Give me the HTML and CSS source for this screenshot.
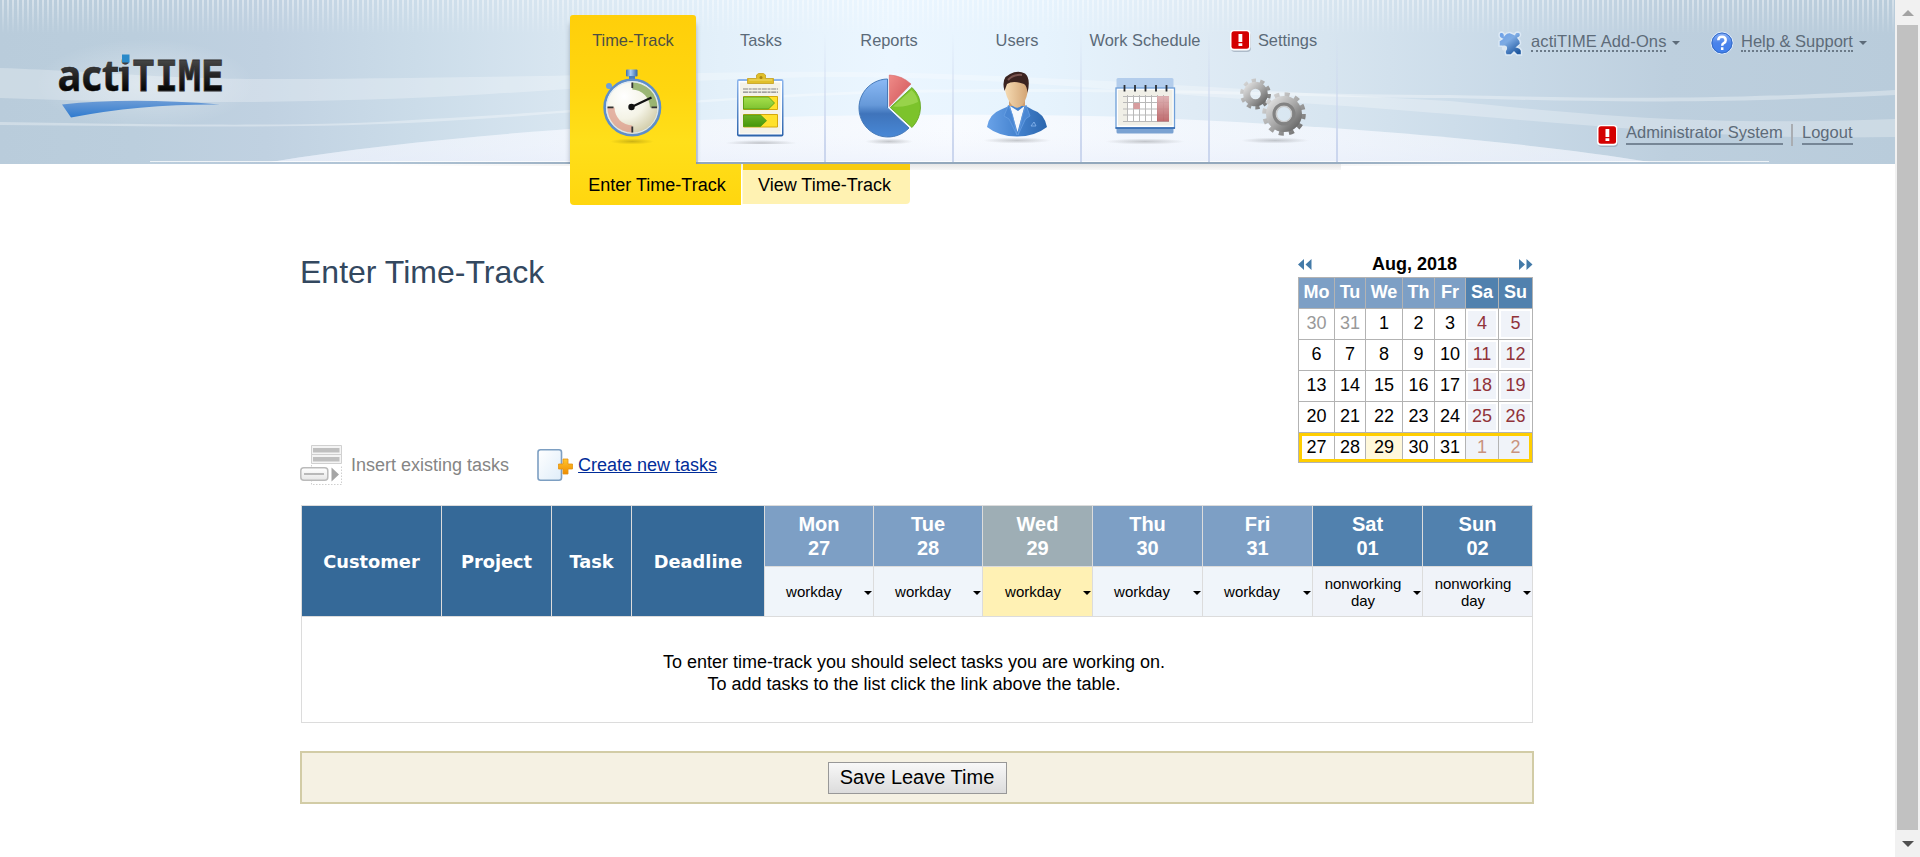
FILE: index.html
```html
<!DOCTYPE html>
<html lang="en">
<head>
<meta charset="utf-8">
<title>actiTIME - Enter Time-Track</title>
<link rel="stylesheet" href="styles.css">
</head>
<body>
<div class="page">
  <header class="header">
    <svg class="backdrop" width="1895" height="172" viewBox="0 0 1895 172" aria-hidden="true">
      <defs>
        <linearGradient id="sky"><stop offset="0" stop-color="#b9ccdb"/><stop offset=".07" stop-color="#bbcedd"/><stop offset=".14" stop-color="#c0d1e1"/><stop offset=".22" stop-color="#cbdce9"/><stop offset=".29" stop-color="#d7e5f0"/><stop offset=".38" stop-color="#e3f0fa"/><stop offset=".47" stop-color="#ebf6ff"/><stop offset=".55" stop-color="#e6f3fd"/><stop offset=".63" stop-color="#dfebf5"/><stop offset=".7" stop-color="#d7e5f0"/><stop offset=".8" stop-color="#c8d9e7"/><stop offset=".88" stop-color="#bdcfde"/><stop offset="1" stop-color="#b9ccdb"/></linearGradient>
        <linearGradient id="fade" x2="0" y2="1"><stop offset="0" stop-color="#fff" stop-opacity=".42"/><stop offset="1" stop-color="#fff" stop-opacity="0"/></linearGradient>
        <pattern id="bars" width="5" height="34" patternUnits="userSpaceOnUse"><rect x="2" width="2" height="34" fill="url(#fade)"/></pattern>
        <linearGradient id="hill" x1="255" x2="1650" gradientUnits="userSpaceOnUse"><stop offset="0" stop-color="#dbe6f1"/><stop offset=".22" stop-color="#edf3fb"/><stop offset=".5" stop-color="#f8fbff"/><stop offset=".78" stop-color="#edf3fb"/><stop offset="1" stop-color="#dce6ef"/></linearGradient>
        <linearGradient id="hillshade" x2="0" y2="1"><stop offset="0" stop-color="#fff" stop-opacity="0"/><stop offset="1" stop-color="#e9eefb" stop-opacity=".5"/></linearGradient>
        <linearGradient id="rule" x1="150" x2="1769" gradientUnits="userSpaceOnUse"><stop offset="0" stop-color="#8fa6bb" stop-opacity="0"/><stop offset=".15" stop-color="#93aabf" stop-opacity=".5"/><stop offset=".3" stop-color="#93a8bc"/><stop offset=".7" stop-color="#93a8bc"/><stop offset=".85" stop-color="#93aabf" stop-opacity=".6"/><stop offset="1" stop-color="#8fa6bb" stop-opacity="0"/></linearGradient>
        <linearGradient id="drop" x1="380" x2="1500" gradientUnits="userSpaceOnUse"><stop offset="0" stop-color="#efefef" stop-opacity="0"/><stop offset=".25" stop-color="#eee"/><stop offset=".75" stop-color="#eee"/><stop offset="1" stop-color="#efefef" stop-opacity="0"/></linearGradient>
        <linearGradient id="below" x2="0" y2="1"><stop offset="0" stop-color="#e6e6e6"/><stop offset="1" stop-color="#f8f8f8"/></linearGradient>
        <radialGradient id="halo"><stop offset="0" stop-color="#fff" stop-opacity=".35"/><stop offset="1" stop-color="#fff" stop-opacity="0"/></radialGradient>
      </defs>
      <rect width="1895" height="164" fill="url(#sky)"/>
      <rect width="1895" height="34" fill="url(#bars)"/>
      <path d="M0 68C118 72 160 79 268 79S600 75 760 72C1000 70 1200 88 1450 101C1600 116 1700 126 1895 119V137C1700 141 1550 120 1330 105C1150 94 1000 76 820 77C660 80 600 88 490 94C320 104 160 104 0 98Z" fill="#fff" opacity=".27"/>
      <path d="M0 122C190 125 320 127 428 119C580 112 700 96 900 90C1150 86 1300 95 1450 95C1600 98 1700 101 1895 90V95C1700 104 1600 102 1450 98C1300 98 1150 89 900 93C700 98 580 114 428 122C320 128 190 127 0 125Z" fill="#fff" opacity=".32"/>
      <path d="M271 162C400 140 560 129 700 120C850 113 1000 114 1130 117C1330 125 1530 142 1650 162Z" fill="url(#hill)"/>
      <path d="M271 162C400 140 560 129 700 120C850 113 1000 114 1130 117C1330 125 1530 142 1650 162Z" fill="url(#hillshade)"/>
      <ellipse cx="145" cy="84" rx="110" ry="45" fill="url(#halo)"/>
      <rect x="150" y="161" width="1619" height="1" fill="#fff" opacity=".75"/>
      <rect x="150" y="162" width="1619" height="2" fill="url(#rule)"/>
      <rect x="380" y="164" width="1120" height="2" fill="url(#drop)"/>
      <rect x="696" y="164" width="645" height="6" fill="url(#below)"/>
    </svg>

    <svg class="logo" width="176" height="70" viewBox="52 50 176 70" role="img" aria-label="actiTIME">
      <defs>
        <linearGradient id="ink" x1="0" x2="0" y1="58" y2="92" gradientUnits="userSpaceOnUse"><stop offset="0" stop-color="#4a4a4a"/><stop offset="1" stop-color="#000"/></linearGradient>
        <linearGradient id="swoosh" x2="0" y2="1"><stop offset="0" stop-color="#6b9bd6"/><stop offset="1" stop-color="#2f7bcf"/></linearGradient>
      </defs>
      <text class="logo-lower" x="57.500" y="90.700" textLength="74" lengthAdjust="spacingAndGlyphs" fill="url(#ink)">acti</text>
      <text class="logo-upper" x="132" y="90.700" textLength="92" lengthAdjust="spacingAndGlyphs" fill="url(#ink)">TIME</text>
      <path d="M119 67.500h6v4h-6z" fill="url(#ink)"/>
      <rect x="122" y="54.500" width="7.500" height="8" fill="#2a8ac9"/>
      <path d="M62 104.500Q130 97 220 104.500Q140 104 71 117.500Z" fill="url(#swoosh)"/>
    </svg>

    <nav class="tabs">
      <a class="tab active"><span class="tab-label">Time-Track</span>
        <svg class="tab-icon" viewBox="570 64 126 80">
          <defs><radialGradient id="dial" cx=".35" cy=".3" r=".8"><stop offset="0" stop-color="#fff"/><stop offset=".5" stop-color="#f4f3e6"/><stop offset="1" stop-color="#c9c39a"/></radialGradient>
          <linearGradient id="knob"><stop offset="0" stop-color="#3c6fb0"/><stop offset=".4" stop-color="#a9cdf5"/><stop offset="1" stop-color="#3566a5"/></linearGradient>
          <radialGradient id="shadow"><stop offset="0" stop-color="#000" stop-opacity=".2"/><stop offset="1" stop-color="#000" stop-opacity="0"/></radialGradient></defs>
          <ellipse cx="632" cy="141.500" rx="22" ry="3" fill="url(#shadow)"/>
          <rect x="626" y="69.500" width="11.500" height="7" rx="1" fill="url(#knob)"/><rect x="629" y="76" width="6" height="4" fill="#4a7dbb"/>
          <path d="M609 86l5 5" stroke="#6c9fd9" stroke-width="3"/><circle cx="609" cy="86" r="3" fill="#6ca0dc"/>
          <circle cx="632.300" cy="107.500" r="27.700" fill="url(#dial)" stroke="#5d8ecb" stroke-width="2.600"/>
          <circle cx="632.300" cy="107.500" r="25.700" fill="none" stroke="#dbe8f4" stroke-width="1"/>
          <path d="M632.300 82.500A25 25 0 0 1 657.300 107.500H650A18 18 0 0 0 632.300 89.500Z" fill="#8cab62" opacity=".85"/>
          <path d="M607.300 107.500A25 25 0 0 0 632.300 132.500V125.500A18 18 0 0 1 614.500 107.500Z" fill="#dd9c8b" opacity=".75"/>
          <path d="M632.300 82.500v5.500M632.300 126.500v6M607.500 107.300h6M651.500 107.300h5.500" stroke="#333" stroke-width="1.800"/>
          <path d="M631.500 107L651.500 97.500" stroke="#111" stroke-width="2.200"/><circle cx="631.500" cy="107" r="3.200" fill="#111"/>
        </svg></a>
      <a class="tab"><span class="tab-label">Tasks</span>
        <svg class="tab-icon" viewBox="698 64 126 80">
          <defs><linearGradient id="board" x2="0" y2="1"><stop offset="0" stop-color="#8db6ee"/><stop offset="1" stop-color="#2c63ab"/></linearGradient>
          <linearGradient id="green" x2="0" y2="1"><stop offset="0" stop-color="#a6e04c"/><stop offset="1" stop-color="#46970a"/></linearGradient></defs>
          <ellipse cx="761" cy="143" rx="36" ry="3" fill="url(#shadow)"/>
          <rect x="737" y="79" width="46.500" height="57.500" rx="2" fill="url(#board)"/><rect x="738.500" y="81" width="43.500" height="53.500" fill="#fff"/><rect x="740" y="82.500" width="40.500" height="51" fill="#f4f2e8"/>
          <path d="M743 89h35M743 92.200h35" stroke="#858585" stroke-width="1.200" stroke-dasharray="5 .7 3 .7"/>
          <path d="M747.500 78.500h9v-3.500l2-1.500h5l2 1.500v3.500h8v5h-26z" fill="#e0bf2b" stroke="#c4a01e" stroke-width=".8"/><path d="M749 80h23" stroke="#f2dc6a"/><circle cx="761" cy="77.500" r="1.500" fill="#a98512"/>
          <path d="M743.500 96.500h34v13h-34zM743.500 114.500h34v12.500h-34z" fill="#ffe12c" stroke="#d5a80c"/>
          <path d="M743.500 97h25l6 6-6 6h-25zM743.500 115h17l6 5.700-6 5.800h-17z" fill="url(#green)" stroke="#4c9910" stroke-width=".8"/>
        </svg></a>
      <a class="tab"><span class="tab-label">Reports</span>
        <svg class="tab-icon" viewBox="826 64 126 80">
          <defs><linearGradient id="blue" x2="0" y2="1"><stop offset="0" stop-color="#8ab9f5"/><stop offset=".45" stop-color="#6699d9"/><stop offset=".6" stop-color="#3f74bb"/><stop offset="1" stop-color="#4888d6"/></linearGradient>
          <linearGradient id="rose" x2="1" y2="1"><stop offset="0" stop-color="#ef8b88"/><stop offset="1" stop-color="#cf5357"/></linearGradient></defs>
          <ellipse cx="889" cy="141.500" rx="24" ry="3" fill="url(#shadow)"/>
          <path d="M887.500 108V79A29 29 0 1 0 909 128Z" fill="url(#blue)" stroke="#467ab9"/>
          <path d="M889.300 106.500V75Q902 75.500 911 84Z" fill="url(#rose)" stroke="#d76363" stroke-width=".6"/>
          <path d="M890.300 107.500L912 87.500Q921 96 920.500 108Q920 119 912 127.500Z" fill="#7cc32b" stroke="#5fa31a" stroke-width=".8"/><path d="M893 106.500L911.500 90Q917 95 918 102Q905 108 893 106.500Z" fill="#a4da59" opacity=".7"/>
        </svg></a>
      <a class="tab"><span class="tab-label">Users</span>
        <svg class="tab-icon" viewBox="954 64 126 80">
          <defs><linearGradient id="suit"><stop offset="0" stop-color="#69a2e8"/><stop offset=".5" stop-color="#4583cf"/><stop offset="1" stop-color="#2b66ae"/></linearGradient>
          <linearGradient id="skin"><stop offset="0" stop-color="#f6dcb4"/><stop offset="1" stop-color="#d2a373"/></linearGradient></defs>
          <ellipse cx="1017" cy="140.500" rx="34" ry="3" fill="url(#shadow)"/>
          <path d="M1009 98h16v17h-16z" fill="#cf9f70"/>
          <path d="M1009 106L1001 109.500Q989 114 987 127Q999 136.500 1017 136.500T1047 127Q1044 113 1033 110L1026 106Z" fill="url(#suit)"/>
          <path d="M1010 106L1017.500 132L1024.500 106L1018 111Z" fill="#f6f9fd"/>
          <path d="M1008.500 105L1004 116L1009 119L1017 135L1012.500 115ZM1026 105L1030 116L1025.500 119L1018 135L1022.500 115Z" fill="#4a87d3" stroke="#6ba2e4" stroke-width=".7"/>
          <path d="M1031 126l3-4 2 4z" fill="none" stroke="#8bb8ef" stroke-width=".8"/>
          <path d="M1004.500 86Q1006 78 1017 78T1028 88Q1027.500 98 1022.500 105Q1017 111 1011 104Q1005.500 97 1004.500 86Z" fill="url(#skin)"/>
          <path d="M1004.500 91Q1002 82 1005.500 77L1010 74Q1018 70 1025 73.500Q1031 78 1027.500 93Q1027 86 1024 84Q1013 80 1007 84Z" fill="#3b2320"/><path d="M1008 80Q1013 74 1022 75" fill="none" stroke="#79534e" stroke-width="2"/>
        </svg></a>
      <a class="tab"><span class="tab-label">Work Schedule</span>
        <svg class="tab-icon" viewBox="1082 64 126 80">
          <defs><linearGradient id="redcol" x2="0" y2="1"><stop offset="0" stop-color="#dcaeb0"/><stop offset="1" stop-color="#ba5f62"/></linearGradient></defs>
          <ellipse cx="1145" cy="141.500" rx="40" ry="3" fill="url(#shadow)"/>
          <rect x="1116.500" y="78" width="57" height="14" rx="1.500" fill="#b3cdec"/><rect x="1116.500" y="122" width="57" height="11.500" rx="1.500" fill="#7aa2d2"/>
          <rect x="1116" y="88" width="58.500" height="40" fill="#fff" stroke="#6f9fd8" stroke-width="1.300"/><rect x="1118" y="90" width="54.500" height="35.500" fill="#f0efe7"/><path d="M1115.500 128h59.500" stroke="#2e65ab" stroke-width="1.500"/>
          <rect x="1127" y="96" width="42" height="25.500" fill="#fff"/>
          <path d="M1127.500 95v27M1133.500 95v27M1139.500 95v27M1145.500 95v27M1151.500 95v27M1157.500 95v27M1163.500 95v27M1123 96.500h46M1123 102.500h46M1123 109h46M1123 115h46M1123 121.500h46" stroke="#b9b9b9"/>
          <rect x="1157" y="96" width="12" height="25.500" fill="url(#redcol)" opacity=".92"/><rect x="1133.500" y="103" width="6.500" height="6" fill="#d79c9e"/>
          <path d="M1124.500 85v6.500M1135 85v6.500M1145.500 85v6.500M1156 85v6.500M1166.500 85v6.500" stroke="#2b2f36" stroke-width="1.800"/>
        </svg></a>
      <a class="tab last"><span class="tab-label"><svg class="alert" width="23" height="24" viewBox="0 0 23 24"><rect x="2" y="3" width="20" height="20" rx="4" fill="#8796a5" opacity=".55"/><rect x="1" y="1" width="20.500" height="20.500" rx="4" fill="#fff"/><rect x="2.500" y="2.300" width="17.500" height="17.500" rx="2.500" fill="#d40000"/><path d="M9.500 5h3.800v8H9.500zM9.500 14.300h3.800v2.700H9.500z" fill="#fff"/></svg>Settings</span>
        <svg class="tab-icon" viewBox="1210 64 126 80">
          <defs><linearGradient id="steel" x2="1" y2="1"><stop offset="0" stop-color="#dcdcdc"/><stop offset=".5" stop-color="#a8a8a8"/><stop offset="1" stop-color="#6a6a6a"/></linearGradient></defs>
          <ellipse cx="1275" cy="140.500" rx="34" ry="3" fill="url(#shadow)"/>
          <circle cx="1255.500" cy="94" r="13.200" fill="none" stroke="url(#steel)" stroke-width="4.500" stroke-dasharray="4.200 4.094"/>
          <circle cx="1255.500" cy="94" r="8.800" fill="none" stroke="url(#steel)" stroke-width="7"/>
          <circle cx="1284" cy="114" r="19.300" fill="none" stroke="url(#steel)" stroke-width="5" stroke-dasharray="5 5.105"/>
          <circle cx="1284" cy="114" r="13" fill="none" stroke="url(#steel)" stroke-width="10"/><circle cx="1284" cy="114" r="10" fill="none" stroke="#828282" stroke-width="3"/><circle cx="1284" cy="114" r="7.500" fill="none" stroke="#c9c9c9" stroke-width="1.200"/>
        </svg></a>
    </nav>

    <div class="account">
      <div class="account-row top-links">
        <svg class="addon-icon" width="26" height="26" viewBox="0 0 26 26"><defs><linearGradient id="puzzle" x2=".7" y2="1"><stop offset="0" stop-color="#6b9fea"/><stop offset=".45" stop-color="#7dabe3"/><stop offset="1" stop-color="#1f58a0"/></linearGradient></defs><path d="M2 5Q2 2 5 2Q7.500 3 7.500 5Q10 2 13 2.500L17.500 4.500Q18 2 21 2Q24 2.500 23.500 5.500Q23 7 21 8Q24 11 23.500 14L20 17Q23.500 17.500 24.500 20.500V25H20L17 22L14 25H9L8 22Q10 18 7 16.500L2 16V11L5 9Q2 8 2 5Z" fill="url(#puzzle)" stroke="#dce9f5" stroke-width="1.400"/><circle cx="7.500" cy="18" r="2.600" fill="#dce8f2"/></svg>
        <a class="dotted addons">actiTIME Add-Ons</a><i class="caret"></i>
        <svg class="help-icon" width="24" height="24" viewBox="0 0 24 24"><defs><linearGradient id="orb" x2="0" y2="1"><stop offset="0" stop-color="#8fb5fa"/><stop offset=".5" stop-color="#4a83ea"/><stop offset="1" stop-color="#3f7fee"/></linearGradient></defs><circle cx="12" cy="12" r="11" fill="url(#orb)" stroke="#e2edf9"/><circle cx="12" cy="12" r="10" fill="none" stroke="#356cc6"/><path d="M8.300 9.300Q8.300 5.800 12 5.800T15.700 9.200Q15.700 11 13.700 12.200Q12.200 13 12.200 14.800M12.200 16.300V19" fill="none" stroke="#fff" stroke-width="2.500"/></svg>
        <a class="dotted help">Help &amp; Support</a><i class="caret"></i>
      </div>
      <div class="account-row user-links">
        <svg class="alert" width="23" height="24" viewBox="0 0 23 24"><rect x="2" y="3" width="20" height="20" rx="4" fill="#8796a5" opacity=".55"/><rect x="1" y="1" width="20.500" height="20.500" rx="4" fill="#fff"/><rect x="2.500" y="2.300" width="17.500" height="17.500" rx="2.500" fill="#d40000"/><path d="M9.500 5h3.800v8H9.500zM9.500 14.300h3.800v2.700H9.500z" fill="#fff"/></svg>
        <a class="solid admin">Administrator System</a><span class="divider"></span><a class="solid logout">Logout</a>
      </div>
    </div>
  </header>

  <nav class="submenu"><a class="sub current">Enter Time-Track</a><a class="sub other">View Time-Track</a></nav>

  <main class="main">
    <div class="top">
      <div class="intro">
        <h1>Enter Time-Track</h1>
        <div class="toolbar">
          <svg class="insert-icon" width="42" height="40" viewBox="0 0 42 40"><defs><linearGradient id="pill" x2="0" y2="1"><stop offset="0" stop-color="#fff"/><stop offset="1" stop-color="#e6e6e6"/></linearGradient></defs><path d="M11.500 .5h30v9h-30zM11.500 9.500h30v9h-30z" fill="#f4f4f4" stroke="#d0d0d0"/><path d="M13 3h26.500v4.500H13zM13 12h26.500v4.500H13z" fill="#bfbfbf"/><path d="M11.500 20v19.500h30V20" fill="none" stroke="#cfcfcf" stroke-dasharray="1.500 1.500"/><rect x=".8" y="22.800" width="27" height="12.500" rx="3" fill="url(#pill)" stroke="#bbb" stroke-width="1.500"/><path d="M4 29h20" stroke="#b9b9b9" stroke-width="2"/><path d="M31.500 22.500v14l7.500-7z" fill="#a5a5a5"/></svg>
          <span class="muted">Insert existing tasks</span>
          <svg class="create-icon" width="36" height="34" viewBox="0 0 36 34"><defs><linearGradient id="sheet" x2="1" y2="1"><stop offset="0" stop-color="#fff"/><stop offset="1" stop-color="#dfedf9"/></linearGradient><linearGradient id="plus" x2="0" y2="1"><stop offset="0" stop-color="#ffc52e"/><stop offset="1" stop-color="#ef8c00"/></linearGradient></defs><rect x="1" y="1.800" width="23.500" height="30.500" rx="2.500" fill="url(#sheet)" stroke="#7d9fc2" stroke-width="1.600"/><path d="M26 11h5v5h4.500v5H31v5h-5v-5h-4.500v-5H26z" fill="url(#plus)" stroke="#e49312" stroke-width=".8"/></svg>
          <a class="link">Create new tasks</a>
        </div>
      </div>
      <section class="calendar">
        <div class="month"><svg width="14" height="11" viewBox="0 0 14 11"><path d="M6 0v11L0 5.500zM13.500 0v11L7.500 5.500z" fill="#437aa8"/></svg><b>Aug, 2018</b><svg width="14" height="11" viewBox="0 0 14 11"><path d="M0 0v11l6-5.500zM7.500 0v11l6-5.500z" fill="#437aa8"/></svg></div>
        <div class="days">
          <b>Mo</b><b>Tu</b><b>We</b><b>Th</b><b>Fr</b><b class="end">Sa</b><b class="end">Su</b>
          <span class="dim">30</span><span class="dim">31</span><span>1</span><span>2</span><span>3</span><span class="off">4</span><span class="off">5</span>
          <span>6</span><span>7</span><span>8</span><span>9</span><span>10</span><span class="off">11</span><span class="off">12</span>
          <span>13</span><span>14</span><span>15</span><span>16</span><span>17</span><span class="off">18</span><span class="off">19</span>
          <span>20</span><span>21</span><span>22</span><span>23</span><span>24</span><span class="off">25</span><span class="off">26</span>
          <span>27</span><span>28</span><span class="today">29</span><span>30</span><span>31</span><span class="off next">1</span><span class="off next">2</span>
          <div class="week-frame"></div>
        </div>
      </section>
    </div>

    <section class="sheet">
      <div class="th">Customer</div><div class="th">Project</div><div class="th">Task</div><div class="th">Deadline</div>
      <div class="day">Mon<br>27</div><div class="day">Tue<br>28</div><div class="day now">Wed<br>29</div><div class="day">Thu<br>30</div><div class="day">Fri<br>31</div><div class="day rest">Sat<br>01</div><div class="day rest">Sun<br>02</div>
      <div class="kind"><span>workday</span></div><div class="kind"><span>workday</span></div><div class="kind marked"><span>workday</span></div><div class="kind"><span>workday</span></div><div class="kind"><span>workday</span></div><div class="kind free"><span>nonworking day</span></div><div class="kind free"><span>nonworking day</span></div>
      <div class="empty">To enter time-track you should select tasks you are working on.<br>To add tasks to the list click the link above the table.</div>
    </section>

    <div class="savebar"><button class="save">Save Leave Time</button></div>
  </main>
</div>
<aside class="scrollbar"><i class="up"></i><div class="thumb"></div><i class="down"></i></aside>
</body>
</html>
```
FILE: styles.css
```css
* { box-sizing: border-box; }
body { margin: 0; width: 1920px; height: 857px; overflow: hidden; display: flex; background: #fff; font-family: "Liberation Sans", Arial, sans-serif; color: #000; font-size: 18px; }
.page { width: 1895px; height: 857px; }

.header { position: relative; height: 164px; display: flex; align-items: flex-start; }
.backdrop { position: absolute; left: 0; top: 0; }
.logo { position: relative; flex: none; margin: 50px 340px 0 52px; overflow: visible; }
.logo-lower { font-family: "Open Sans", "Noto Sans", sans-serif; font-weight: 700; font-size: 43px; stroke: #222; stroke-width: .5px; }
.logo-upper { font-family: "DejaVu Sans Mono", monospace; font-weight: 700; font-size: 43.5px; stroke: #333; stroke-width: .8px; }

.tabs { position: relative; display: flex; flex: none; width: 770px; height: 164px; }
.tab { width: 128px; height: 162px; padding: 30px 0 0 2px; display: flex; flex-direction: column; align-items: center; color: #5b6a78; font-size: 16.4px; background: linear-gradient(rgba(196,208,236,0) 20%, #cbd6ee 90%) left / 2px 100% no-repeat; }
.tab.last { width: 130px; padding-right: 2px; background: linear-gradient(rgba(196,208,236,0) 20%, #cbd6ee 90%) left / 2px 100% no-repeat, linear-gradient(rgba(196,208,236,0) 20%, #cbd6ee 90%) right / 2px 100% no-repeat; }
.tab.active { height: 149px; margin: 15px 0 0 2px; width: 126px; padding: 15px 0 0; border-radius: 3px 3px 0 0; color: #4c4f44; background: linear-gradient(#ffcf0a, #ffd60f 50%, #ffdf1a 85%, #ffdc16); box-shadow: 0 8px 5px rgba(70,80,100,.4); clip-path: inset(-5px -5px 0 -5px); }
.tab-label { height: 20px; line-height: 20px; display: flex; align-items: center; white-space: nowrap; }
.tab-icon { display: block; width: 126px; height: 80px; margin-top: 14px; }
.tab-label .alert { margin: 2px 6px 0 0; }

.account { position: relative; width: 397px; margin-left: auto; padding: 30px 0 0; color: #5d6b79; font-size: 16.5px; }
.account-row { display: flex; align-items: flex-start; line-height: 20px; white-space: nowrap; }
.account-row.top-links { height: 94px; }
.account-row.user-links { margin-left: 98px; }
.dotted { margin-top: 1px; height: 21px; border-bottom: 2px dotted #6b7a88; }
.addon-icon { margin: 0 8px 0 -1px; }
.addons { width: 135px; letter-spacing: .1px; }
.help { width: 112px; }
.help-icon { margin: 1px 7px 0 30px; }
.caret { border: 4px solid transparent; border-top-color: #5d6b79; border-bottom: 0; margin: 11px 0 0 6px; }
.solid { margin-top: -2px; height: 23px; border-bottom: 2px solid #768696; }
.user-links .alert { margin-right: 7px; }
.admin { width: 157px; }
.logout { width: 51px; }
.divider { width: 2px; height: 22px; background: #a9adb2; margin: 0 9px 0 8px; }

.submenu { position: relative; display: flex; padding-left: 570px; height: 41px; line-height: 42px; }
.sub { text-align: center; }
.sub.current { width: 171px; height: 41px; padding-left: 3px; background: linear-gradient(#ffdc16, #ffd60f); border-radius: 0 0 0 4px; }
.sub.other { width: 168px; height: 40px; margin-left: 1px; padding-right: 4px; background: linear-gradient(#f8cc10 6px, #fff2b2 6px); border-left: 1px solid #fff8d8; border-radius: 0 0 4px 0; }

.main { width: 1234px; margin-left: 300px; }
.top { display: flex; height: 300px; }
.intro { flex: 1; }
h1 { margin: 49px 0 0; height: 36px; line-height: 36px; font-size: 32px; font-weight: 400; color: #33485f; }
.toolbar { display: flex; align-items: center; height: 40px; margin-top: 155px; }
.muted { margin: 0 28px 0 9px; color: #858585; }
.link { margin-left: 5px; color: #002c99; text-decoration: underline; }

.calendar { width: 236px; padding-top: 46px; }
.month { height: 26px; width: 235px; display: flex; justify-content: space-between; align-items: center; }
.month b { margin-right: 2px; }
.days { position: relative; width: 235px; display: grid; grid-template-columns: 35px 30px 36px 31px 30px 32px 33px; grid-template-rows: repeat(5, 30px) 29px; gap: 1px; padding: 1px; background: #b3b3b3; text-align: center; line-height: 29px; }
.days b { color: #fff; background: #7d9fc5; }
.days .end { background: #5181ae; }
.days span { background: #fff; }
.days .dim { color: #999; }
.days .off { color: #913239; background: #f0f3f9; border: 2px solid #fff; line-height: 25px; }
.days .next { color: #c9937f; border-color: #f0f3f9; }
.days .today { background: #fff8da; }
.week-frame { position: absolute; left: 1px; right: 1px; bottom: 1px; height: 29px; border: 3px solid #ffce00; }

.sheet { width: 1232px; margin-left: 1px; display: grid; grid-template-columns: 139px 109px 79px 132px 108px 108px 109px 109px 109px 109px 109px; grid-template-rows: 60px 49px 105px; gap: 1px; padding: 1px; background: #dcdcdc; text-align: center; }
.th { grid-row: 1 / 3; background: #356998; color: #fff; font: 700 17.8px/111px "DejaVu Sans", Verdana, sans-serif; }
.day { background: #7d9fc5; color: #fff; font-weight: 700; font-size: 20px; line-height: 24px; padding-top: 6px; }
.day.now { background: #9eaeb5; }
.day.rest { background: #5181ae; }
.kind { grid-row: 2; background: #f0f5fa; font-size: 15px; line-height: 17px; display: flex; align-items: center; justify-content: space-between; padding: 0 1px 0 9px; }
.kind span { width: 80px; }
.kind::after { content: ""; border: 4px solid transparent; border-top-color: #000; border-bottom: 0; margin-top: 3px; }
.kind.marked { background: #fff1b4; padding-left: 10px; }
.kind.free { background: #f0f3f9; padding-left: 10px; }
.empty { grid-column: 1 / -1; background: #fff; padding: 34px 6px 0 0; line-height: 22px; }

.savebar { margin-top: 28px; height: 53px; border: 2px solid #d2cca6; background: #f5f1e3; display: flex; justify-content: center; padding-top: 9px; }
.save { width: 179px; height: 32px; padding: 0 0 2px; border: 1px solid #989898; background: linear-gradient(#f8f8f8, #dcdcdc); font: 20px "Liberation Sans", Arial, sans-serif; color: #000; white-space: nowrap; }

.scrollbar { width: 25px; height: 857px; background: #f1f1f1; display: flex; flex-direction: column; align-items: center; }
.up { margin: 10px 0 9px; border: 6px solid transparent; border-top: 0; border-bottom-color: #a3a3a3; }
.thumb { width: 21px; height: 805px; background: #c1c1c1; }
.down { margin-top: 11px; border: 6px solid transparent; border-bottom: 0; border-top-color: #505050; }
```
